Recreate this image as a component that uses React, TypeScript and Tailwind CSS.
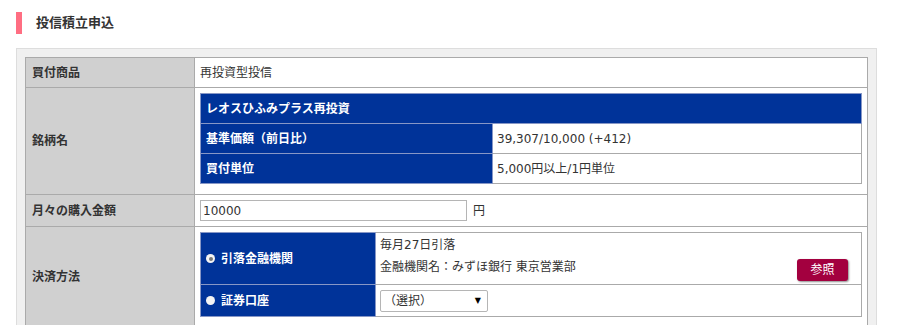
export default function App() {
  const labelCell = 'border border-[#aaaaaa] bg-[#d0d0d0] pl-[6px] text-left align-middle font-bold'
  const valueCell = 'border border-[#aaaaaa] bg-white px-[5px] align-middle'
  const blueCell = 'border border-[#8797c6] bg-[#003399] pl-[5px] text-left align-middle font-bold text-white'
  const subCell = 'border border-[#aaaaaa] bg-white pl-[4px] align-middle'

  return (
    <div className="min-h-[325px] bg-white font-['DejaVu_Sans','Noto_Sans_CJK_JP',sans-serif] text-[12px] text-[#333333]">
      <div className="pl-4 pt-3">
        <div className="flex h-[22px] items-center border-l-[6px] border-[#ff6e82] pl-[14px] text-[13px] font-bold">
          投信積立申込
        </div>
      </div>

      <div className="ml-4 mt-[14px] w-[861px] border border-[#dddddd] bg-[#f0f0f0] px-2 pt-2">
        <table className="w-full border-collapse border border-[#aaaaaa] bg-white">
          <tbody>
            <tr className="h-[30px]">
              <th className={`${labelCell} w-[169px]`}>買付商品</th>
              <td className={valueCell}>再投資型投信</td>
            </tr>

            <tr className="h-[107px]">
              <th className={labelCell}>銘柄名</th>
              <td className={`${valueCell} pb-[10px] pt-[5px]`}>
                <table className="w-full border-collapse border border-[#999999]">
                  <tbody>
                    <tr className="h-[30px]">
                      <th colSpan={2} className={blueCell}>
                        レオスひふみプラス再投資
                      </th>
                    </tr>
                    <tr className="h-[30px]">
                      <th className={`${blueCell} w-[292px]`}>基準価額（前日比）</th>
                      <td className={subCell}>39,307/10,000 (+412)</td>
                    </tr>
                    <tr className="h-[30px]">
                      <th className={blueCell}>買付単位</th>
                      <td className={subCell}>5,000円以上/1円単位</td>
                    </tr>
                  </tbody>
                </table>
              </td>
            </tr>

            <tr className="h-[32px]">
              <th className={labelCell}>月々の購入金額</th>
              <td className={valueCell}>
                <div className="flex items-center">
                  <input
                    readOnly
                    value="10000"
                    className="h-[21px] w-[267px] border border-[#b5b5b5] bg-white px-[2px] text-[12px] text-[#333333] outline-none"
                  />
                  <span className="ml-[6px]">円</span>
                </div>
              </td>
            </tr>

            <tr className="h-[100px]">
              <th className={labelCell}>決済方法</th>
              <td className={`${valueCell} pb-[10px] pt-[5px]`}>
                <table className="w-full border-collapse border border-[#999999]">
                  <tbody>
                    <tr className="h-[52px]">
                      <th className={`${blueCell} w-[175px]`}>
                        <div className="flex items-center gap-[6px]">
                          <span className="flex size-[9px] items-center justify-center rounded-full bg-[#f4f4f4]">
                            <span className="size-[4px] rounded-full bg-[#777777]" />
                          </span>
                          引落金融機関
                        </div>
                      </th>
                      <td className={`${subCell} pr-[13px] pt-[1px] align-top leading-[22px]`}>
                        <div>毎月27日引落</div>
                        <div className="flex items-start justify-between">
                          <span>金融機関名：みずほ銀行 東京営業部</span>
                          <button className="mt-[3px] h-[22px] w-[51px] rounded-[3px] bg-[#a3003f] text-[12px] leading-[22px] text-white shadow-[1px_1px_2px_rgba(0,0,0,0.45)]">
                            参照
                          </button>
                        </div>
                      </td>
                    </tr>
                    <tr className="h-[32px]">
                      <th className={blueCell}>
                        <div className="flex items-center gap-[6px]">
                          <span className="size-[9px] rounded-full bg-[#f4f4f4]" />
                          証券口座
                        </div>
                      </th>
                      <td className={subCell}>
                        <div className="flex h-[22px] w-[108px] items-center justify-between rounded-[2px] border border-[#b5b5b5] bg-white pl-[3px] pr-[6px]">
                          <span>（選択）</span>
                          <span className="text-[8px] text-black">▼</span>
                        </div>
                      </td>
                    </tr>
                  </tbody>
                </table>
              </td>
            </tr>
          </tbody>
        </table>
      </div>
    </div>
  )
}
